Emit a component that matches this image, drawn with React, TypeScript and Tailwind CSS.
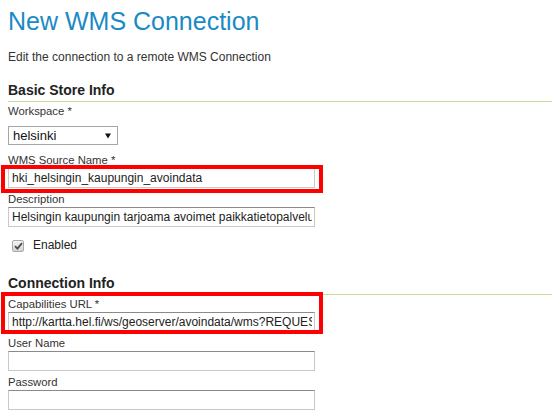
const inputClass =
  "block w-[307px] h-[20px] mb-[2px] border border-[#c9c9c9] border-t-[#8a8a8a] bg-white pl-[3px] pr-[2px] text-[12px] text-[#222] outline-none";

function Label({ children }: { children: React.ReactNode }) {
  return (
    <label className="block h-[17px] pt-[2px] text-[11.3px] leading-[15px] text-[#333]">
      {children}
    </label>
  );
}

function SectionTitle({ children }: { children: React.ReactNode }) {
  return (
    <h3 className="-mr-[8px] border-b border-[#c5e09b] pb-[2px] text-[14px] font-bold leading-[17px] text-[#222]">
      {children}
    </h3>
  );
}

export default function App() {
  return (
    <div className="relative h-[417px] w-[552px] overflow-hidden bg-white px-[8px] font-['Liberation_Sans',Arial,sans-serif] text-[#333]">
      {/* Page header */}
      <h1 className="mt-[6px] text-[25px] leading-[30px] font-normal text-[#1b8ac4]">
        New WMS Connection
      </h1>
      <p className="mt-[14px] text-[12px] leading-[15px]">
        Edit the connection to a remote WMS Connection
      </p>

      {/* Basic store info */}
      <div className="mt-[17px]">
        <SectionTitle>Basic Store Info</SectionTitle>
        <Label>Workspace *</Label>
        <div className="mt-[7px] flex h-[19px] w-[110px] items-center justify-between border border-[#a6a6a6] bg-white pl-[4px] pr-[6px] text-[13px] text-[#111]">
          <span>helsinki</span>
          <svg width="6" height="6" viewBox="0 0 6 6">
            <path d="M0 0.5 H6 L3 5.5 Z" fill="#111" />
          </svg>
        </div>

        <div className="mt-[6px]">
          <Label>WMS Source Name *</Label>
          <input className={inputClass} defaultValue="hki_helsingin_kaupungin_avoindata" />
          <Label>Description</Label>
          <input
            className={inputClass}
            defaultValue="Helsingin kaupungin tarjoama avoimet paikkatietopalvelut"
          />
        </div>

        <div className="mt-[11px] flex h-[15px] items-center">
          <div className="ml-[4px] flex h-[12px] w-[12px] items-center justify-center rounded-[2px] border border-[#a9a9a9] bg-gradient-to-b from-[#f4f4f4] to-[#d4d4d4]">
            <svg width="9" height="8" viewBox="0 0 9 8">
              <path d="M1 4.2 L3.4 6.6 L8 1.2" fill="none" stroke="#4d4d4d" strokeWidth="1.8" />
            </svg>
          </div>
          <span className="ml-[9px] text-[12px] leading-[15px] text-[#222]">Enabled</span>
        </div>
      </div>

      {/* Connection info */}
      <div className="mt-[22px]">
        <SectionTitle>Connection Info</SectionTitle>
        <Label>Capabilities URL *</Label>
        <input
          className={inputClass}
          defaultValue="http://kartta.hel.fi/ws/geoserver/avoindata/wms?REQUEST=GetCapabilities"
        />
        <Label>User Name</Label>
        <input className={inputClass} defaultValue="" />
        <Label>Password</Label>
        <input type="password" className={inputClass} defaultValue="" />
      </div>

      {/* red highlight annotations */}
      <div className="pointer-events-none absolute left-[1px] top-[165px] h-[28px] w-[322px] border-[4px] border-[#ff0000]" />
      <div className="pointer-events-none absolute left-[1px] top-[292px] h-[42px] w-[322px] border-[4px] border-[#ff0000]" />
    </div>
  );
}
